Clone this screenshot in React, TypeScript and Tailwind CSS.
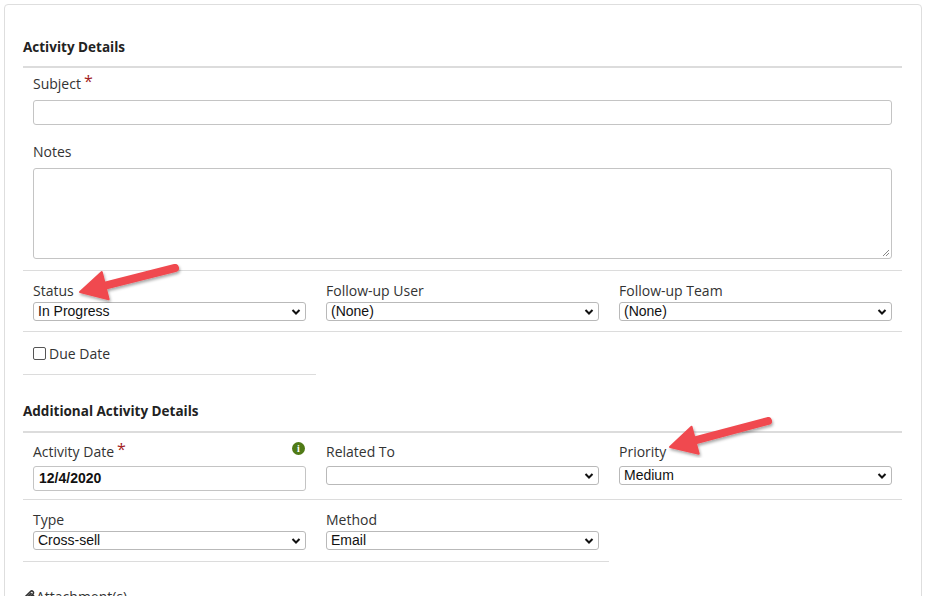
import React from "react";

const Chev = () => (
  <svg width="10" height="8" viewBox="0 0 10 8" className="shrink-0"><path d="M1.5 2 L5 5.5 L8.5 2" stroke="#111" strokeWidth="2" fill="none" /></svg>
);

const Select = ({ v }: { v: string }) => (
  <div className="h-[19px] border border-[#b9b9b9] rounded-[3px] flex items-center justify-between pl-[4px] pr-[4px] text-[14px] text-[#111] bg-white" style={{ fontFamily: "'Liberation Sans', Arial, sans-serif" }}>
    <span>{v}</span><Chev />
  </div>
);

const Label = ({ t, req, info }: { t: string; req?: boolean; info?: boolean }) => (
  <div className="flex items-start justify-between h-[19px] text-[14px] leading-[15px] text-[#333]">
    <span>{t}{req && <span className="text-[#a31d1d] text-[16px] ml-[3px] relative -top-[2px]">*</span>}</span>
    {info && <span className="w-[13px] h-[13px] rounded-full bg-[#4f7a16] text-white text-[10px] font-bold flex items-center justify-center -mt-[2px] mr-[1px]" style={{ fontFamily: "Georgia, serif" }}>i</span>}
  </div>
);

const Cell = ({ children }: { children: React.ReactNode }) => <div className="w-[293px] px-[10px]">{children}</div>;

const Arrow = ({ x1, y1, x2, y2 }: { x1: number; y1: number; x2: number; y2: number }) => {
  const a = Math.atan2(y2 - y1, x2 - x1);
  const L = 26, W = 14;
  const bx = x2 - L * Math.cos(a), by = y2 - L * Math.sin(a);
  const px = -Math.sin(a) * W, py = Math.cos(a) * W;
  return (
    <g filter="url(#sh)">
      <line x1={x1} y1={y1} x2={bx} y2={by} stroke="#f04a4f" strokeWidth="8" strokeLinecap="round" />
      <polygon points={`${x2},${y2} ${bx + px},${by + py} ${bx - px},${by - py}`} fill="#f04a4f" strokeLinejoin="round" stroke="#f04a4f" strokeWidth="2" />
    </g>
  );
};

export default function App() {
  return (
    <div className="relative w-[925px] h-[596px] overflow-hidden bg-white" style={{ fontFamily: "'Open Sans', 'Noto Sans', sans-serif" }}>
      <div className="absolute left-[4px] top-[4px] w-[918px] h-[620px] border border-[#dedede] rounded-[4px]" />
      <div className="relative pl-[23px] pr-[23px] pt-[37px] w-[925px]">
        <div className="text-[13.5px] font-bold text-[#222] h-[29px]">Activity Details</div>
        <div className="h-[2px] bg-[#dcdcdc] w-[879px]" />
        <div className="px-[10px] pt-[8px] w-[879px]">
          <Label t="Subject" req />
          <div className="mt-[5px] h-[25px] border border-[#c4c4c4] rounded-[3px]" />
          <div className="mt-[19px]"><Label t="Notes" /></div>
          <div className="mt-[5px] h-[91px] border border-[#c4c4c4] rounded-[3px] relative">
            <svg className="absolute right-[1px] bottom-[1px]" width="8" height="8"><path d="M7 1 L1 7 M7 4 L4 7" stroke="#888" /></svg>
          </div>
        </div>
        <div className="h-[1px] bg-[#dcdcdc] w-[879px] mt-[11px]" />
        <div className="flex pt-[12px] h-[60px]">
          <Cell><Label t="Status" /><Select v="In Progress" /></Cell>
          <Cell><Label t="Follow-up User" /><Select v="(None)" /></Cell>
          <Cell><Label t="Follow-up Team" /><Select v="(None)" /></Cell>
        </div>
        <div className="h-[1px] bg-[#dcdcdc] w-[879px]" />
        <div className="px-[10px] h-[42px] flex items-center text-[14px] text-[#333] gap-[3px]">
          <span className="w-[13px] h-[13px] border border-[#555] rounded-[2px] bg-white" />Due Date
        </div>
        <div className="h-[1px] bg-[#dcdcdc] w-[293px]" />
        <div className="text-[13.5px] font-bold text-[#222] pt-[26px] h-[56px]">Additional Activity Details</div>
        <div className="h-[2px] bg-[#dcdcdc] w-[879px]" />
        <div className="flex pt-[11px] h-[66px]">
          <Cell>
            <Label t="Activity Date" req info />
            <div className="mt-[3px] h-[25px] border border-[#c4c4c4] rounded-[3px] flex items-center pl-[5px] text-[14px] font-bold text-[#111]" style={{ fontFamily: "'Liberation Sans', Arial, sans-serif" }}>12/4/2020</div>
          </Cell>
          <Cell><Label t="Related To" /><div className="h-[3px]" /><Select v="" /></Cell>
          <Cell><Label t="Priority" /><div className="h-[3px]" /><Select v="Medium" /></Cell>
        </div>
        <div className="h-[1px] bg-[#dcdcdc] w-[879px]" />
        <div className="flex pt-[12px] h-[61px]">
          <Cell><Label t="Type" /><Select v="Cross-sell" /></Cell>
          <Cell><Label t="Method" /><Select v="Email" /></Cell>
        </div>
        <div className="h-[1px] bg-[#dcdcdc] w-[586px]" />
        <div className="pt-[24px] text-[14px] text-[#333] flex items-center">
          <svg width="13" height="13" viewBox="0 0 13 13"><path d="M11 5 L5.5 10.5 A2.5 2.5 0 0 1 2 7 L7.5 1.5 A1.6 1.6 0 0 1 10 4 L4.8 9.2 A0.8 0.8 0 0 1 3.6 8 L8.5 3" stroke="#333" strokeWidth="1.6" fill="none" /></svg>
          Attachment(s)
        </div>
      </div>
      <svg className="absolute left-0 top-0 pointer-events-none" width="925" height="596">
        <defs><filter id="sh"><feDropShadow dx="1" dy="2" stdDeviation="1.5" floodOpacity="0.35" /></filter></defs>
        <Arrow x1={175} y1={268} x2={80} y2={292} />
        <Arrow x1={768} y1={421} x2={670} y2={447} />
      </svg>
    </div>
  );
}
